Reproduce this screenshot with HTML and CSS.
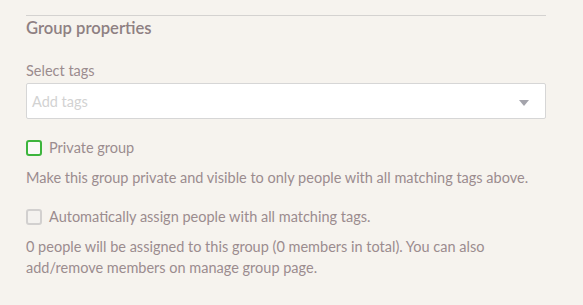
FILE: index.html
```html
<!DOCTYPE html>
<html>
<head>
<meta charset="utf-8">
<link rel="stylesheet" href="styles.css">
</head>
<body>
<section class="panel">
  <hr class="rule">
  <h2 class="title">Group properties</h2>
  <div class="field">
    <label class="label">Select tags</label>
    <div class="select">
      <span class="placeholder">Add tags</span>
      <span class="caret"></span>
    </div>
  </div>
  <div class="check-row">
    <span class="box box-active"></span>
    <span class="check-label">Private group</span>
  </div>
  <p class="help">Make this group private and visible to only people with all matching tags above.</p>
  <div class="check-row check-row-2">
    <span class="box box-disabled"></span>
    <span class="check-label">Automatically assign people with all matching tags.</span>
  </div>
  <p class="help help-2">0 people will be assigned to this group (0 members in total). You can also add/remove members on manage group page.</p>
</section>
</body>
</html>
```
FILE: styles.css
```css
html, body {
  margin: 0;
  padding: 0;
  background: #f6f3ee;
}
body {
  font-family: Lato, "Noto Sans", sans-serif;
  color: #9b8c8e;
  width: 583px;
  height: 305px;
  overflow: hidden;
}
.panel {
  padding: 15px 37px 0 26px;
}
.rule {
  margin: 0;
  border: 0;
  border-top: 1px solid #d4d2d0;
}
.title {
  margin: 2px 0 0;
  font-size: 16.6px;
  font-weight: 600;
  line-height: 20px;
  color: #8e8082;
}
.field {
  margin-top: 24px;
}
.label {
  display: block;
  font-size: 14.5px;
  line-height: 18px;
  color: #9b8c8e;
}
.select {
  margin-top: 3px;
  height: 34px;
  border: 1px solid #d6d6d6;
  border-radius: 2px;
  background: #fff;
  display: flex;
  align-items: center;
  justify-content: space-between;
  padding: 0 16px 0 5px;
}
.placeholder {
  font-size: 14.5px;
  color: #d2d2d2;
}
.caret {
  width: 0;
  height: 0;
  border-left: 5px solid transparent;
  border-right: 5px solid transparent;
  border-top: 6px solid #a4a4ac;
  margin-top: 3px;
}
.check-row {
  display: flex;
  align-items: center;
  gap: 7px;
  margin-top: 20px;
  font-size: 14.5px;
}
.check-row-2 {
  margin-top: 20px;
}
.box {
  width: 12px;
  height: 12px;
  border-radius: 3px;
  border: 2px solid;
  flex: none;
}
.box-active {
  border-color: #3db53d;
  background: #fafaf8;
}
.box-disabled {
  border-color: #d2d0cf;
  background: #f4f2ef;
}
.check-label {
  line-height: 18px;
}
.help {
  margin: 10px 0 0;
  font-size: 14.5px;
  line-height: 21px;
}
.help-2 {
  margin-top: 10px;
}
```
